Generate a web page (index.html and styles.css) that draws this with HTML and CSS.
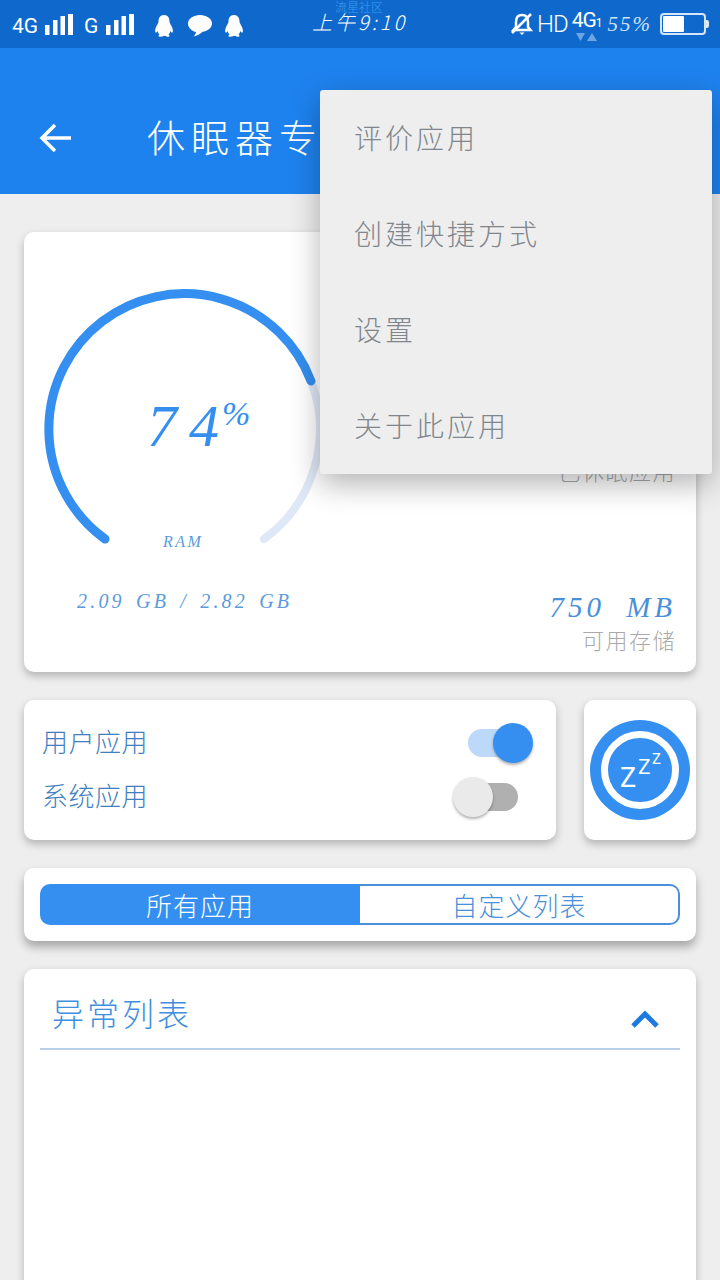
FILE: index.html
```html
<!DOCTYPE html>
<html lang="zh-CN">
<head>
    <meta charset="UTF-8">
    <meta name="viewport" content="width=device-width, initial-scale=1.0">
    <title>休眠器专</title>
    <link rel="stylesheet" href="styles.css">
</head>
<body>

    <!-- Status bar -->
    <div class="status-bar">
        <div class="status-left">
            <span class="net-label">4G</span>
            <svg class="signal" width="30" height="24" viewBox="0 0 30 24"><rect x="0" y="11" width="4.500" height="10" fill="#fff"/><rect x="8" y="6" width="4.500" height="15" fill="#fff"/><rect x="15.500" y="2" width="4.500" height="19" fill="#fff"/><rect x="23" y="0" width="5" height="21" fill="#fff"/></svg>
            <span class="net-label net-g">G</span>
            <svg class="signal" width="30" height="24" viewBox="0 0 30 24"><rect x="0" y="11" width="4.500" height="10" fill="#fff"/><rect x="8" y="6" width="4.500" height="15" fill="#fff"/><rect x="15.500" y="2" width="4.500" height="19" fill="#fff"/><rect x="23" y="0" width="5" height="21" fill="#fff"/></svg>
            <svg class="notify first" width="20" height="22" viewBox="0 0 20 22"><path d="M10 0C6 0 4.500 3 4.500 6.500C4.500 8 3.500 9 2.500 11C1.500 13 0.500 16 1.500 17.500C2.300 18 3.200 17 3.700 16C4 17.500 4.500 18.500 5.500 19.500C4.500 20 4 21 5 21.500C6.500 22 9 21.500 10 20.800C11 21.500 13.500 22 15 21.500C16 21 15.500 20 14.500 19.500C15.500 18.500 16 17.500 16.300 16C16.800 17 17.700 18 18.500 17.500C19.500 16 18.500 13 17.500 11C16.500 9 15.500 8 15.500 6.500C15.500 3 14 0 10 0Z" fill="#fff"/></svg>
            <svg class="notify chat" width="24" height="22" viewBox="0 0 24 22"><path d="M12 0C5.500 0 0 3.600 0 8.500C0 13 4.500 16.500 8 17C7.800 18.500 7 20 5.500 21.500C9 21 12.500 19 14.500 16.800C19.500 16 24 13 24 8.500C24 3.600 18.500 0 12 0Z" fill="#fff"/></svg>
            <svg class="notify" width="20" height="22" viewBox="0 0 20 22"><path d="M10 0C6 0 4.500 3 4.500 6.500C4.500 8 3.500 9 2.500 11C1.500 13 0.500 16 1.500 17.500C2.300 18 3.200 17 3.700 16C4 17.500 4.500 18.500 5.500 19.500C4.500 20 4 21 5 21.500C6.500 22 9 21.500 10 20.800C11 21.500 13.500 22 15 21.500C16 21 15.500 20 14.500 19.500C15.500 18.500 16 17.500 16.300 16C16.800 17 17.700 18 18.500 17.500C19.500 16 18.500 13 17.500 11C16.500 9 15.500 8 15.500 6.500C15.500 3 14 0 10 0Z" fill="#fff"/></svg>
        </div>
        <div class="status-center">
            <span class="watermark">流星社区</span>
            <span class="clock">上午9:10</span>
        </div>
        <div class="status-right">
            <svg width="22" height="24" viewBox="0 0 22 24"><path d="M11 3C7 3 5 6 5 10V15L2.500 18H19.500L17 15V10C17 6 15 3 11 3Z" fill="none" stroke="#fff" stroke-width="2.500"/><path d="M8.500 20.500H13.500L11 23Z" fill="#fff"/><path d="M1 21L20 2" stroke="#fff" stroke-width="2.500"/></svg>
            <span class="hd">HD</span>
            <div class="net-four">
                <span class="four-label">4G<small>1</small></span>
                <svg width="22" height="8" viewBox="0 0 22 8"><path d="M0 0H9L4.500 8Z" fill="#6ea5e6"/><path d="M11 8H21L16 0Z" fill="#6ea5e6"/></svg>
            </div>
            <span class="battery-text">55%</span>
            <div class="battery"><div class="battery-fill"></div></div>
            <div class="battery-tip"></div>
        </div>
    </div>

    <!-- Title bar -->
    <div class="app-bar">
        <svg class="back-icon" width="34" height="32" viewBox="0 0 34 32"><path d="M32 16H3M16 3L3 16L16 29" fill="none" stroke="#fff" stroke-width="3.500"/></svg>
        <span class="app-title">休眠器专</span>
    </div>

    <div class="content">

        <div class="card info-card">
            <div class="ram-side">
                <div class="gauge">
                    <svg class="gauge-ring" width="290" height="270" viewBox="0 0 290 270">
                        <path d="M277 91A135.500 135.500 0 0 1 230 249" fill="none" stroke="#dfe8f6" stroke-width="8" stroke-linecap="round"/>
                        <path d="M71 249A135.500 135.500 0 1 1 277 91" fill="none" stroke="#348ff0" stroke-width="9" stroke-linecap="round"/>
                    </svg>
                    <div class="gauge-value">74<sup>%</sup></div>
                    <div class="gauge-label">RAM</div>
                </div>
                <div class="ram-usage">2.09 GB / 2.82 GB</div>
            </div>
            <div class="storage-side">
                <div class="hibernated">已休眠应用</div>
                <div>
                    <div class="storage-value">750 MB</div>
                    <div class="storage-label">可用存储</div>
                </div>
            </div>
        </div>

        <div class="switch-row">
            <div class="card switch-card">
                <div class="switch-line">
                    <span>用户应用</span>
                    <div class="switch on"><div class="knob"></div></div>
                </div>
                <div class="switch-line">
                    <span>系统应用</span>
                    <div class="switch"><div class="knob"></div></div>
                </div>
            </div>
            <div class="card sleep-card">
                <svg width="100" height="100" viewBox="0 0 100 100">
                    <circle cx="50" cy="50" r="50" fill="#348ff0"/>
                    <circle cx="50" cy="50" r="35.500" fill="#348ff0" stroke="#fff" stroke-width="7"/>
                    <text x="30" y="67" class="zzz zzz-big">Z</text>
                    <text x="48" y="54" class="zzz zzz-mid">Z</text>
                    <text x="62" y="44" class="zzz zzz-small">Z</text>
                </svg>
            </div>
        </div>

        <div class="card tab-card">
            <div class="tabs">
                <div class="tab active">所有应用</div>
                <div class="tab">自定义列表</div>
            </div>
        </div>

        <div class="card list-card">
            <div class="list-head">
                <span class="list-title">异常列表</span>
                <svg width="30" height="18" viewBox="0 0 30 18"><path d="M3 16L15 4L27 16" fill="none" stroke="#1e7ae0" stroke-width="5"/></svg>
            </div>
        </div>

    </div>

    <!-- Overflow menu (open) -->
    <div class="popup-menu">
        <div class="menu-item">评价应用</div>
        <div class="menu-item">创建快捷方式</div>
        <div class="menu-item">设置</div>
        <div class="menu-item">关于此应用</div>
    </div>

</body>
</html>
```

FILE: styles.css
```css
body {
    margin: 0;
    width: 720px;
    height: 1280px;
    overflow: hidden;
    position: relative;
    background-color: #eeeeee;
    font-family: "Noto Sans CJK SC", "Noto Sans", sans-serif;
    font-weight: 300;
}
.status-bar {
    height: 48px;
    background-color: #0f69cc;
    color: #fff;
    display: flex;
    align-items: center;
    padding: 0 0 0 12px;
    box-sizing: border-box;
}
.status-left {
    width: 296px;
    padding-top: 4px;
    display: flex;
    align-items: center;
    flex-shrink: 0;
}
.net-label {
    font-family: Roboto, sans-serif;
    font-weight: 400;
    font-size: 21px;
    margin-right: 7px;
}
.net-g {
    margin-left: 9px;
    margin-right: 8px;
}
.notify {
    margin-left: 12px;
}
.notify.first {
    margin-left: 18px;
}
.notify.chat {
    margin-left: 14px;
}
.status-center {
    width: 100px;
    padding-left: 4px;
    padding-bottom: 6px;
    box-sizing: border-box;
    position: relative;
    flex-shrink: 0;
}
.watermark {
    position: absolute;
    left: 27px;
    top: -6px;
    font-size: 12px;
    line-height: 12px;
    color: #3d9bf0;
    white-space: nowrap;
}
.clock {
    font-size: 20px;
    letter-spacing: 3px;
    white-space: nowrap;
    font-style: italic;
}
.status-right {
    display: flex;
    align-items: center;
    margin-left: 103px;
}
.hd {
    font-family: Roboto, sans-serif;
    font-weight: 300;
    font-size: 24px;
    margin-left: 4px;
    letter-spacing: -1px;
}
.net-four {
    display: flex;
    flex-direction: column;
    align-items: center;
    margin-left: 4px;
    height: 38px;
}
.net-four svg {
    flex-shrink: 0;
    margin-top: -5px;
}
.four-label {
    font-family: Roboto, sans-serif;
    font-size: 21px;
    line-height: 30px;
    letter-spacing: -1px;
    font-weight: 400;
}
.four-label small {
    font-size: 12px;
}
.battery-text {
    font-family: "Liberation Serif", serif;
    font-style: italic;
    font-size: 21px;
    color: #cfe2f8;
    letter-spacing: 2px;
    margin-left: 6px;
}
.battery {
    width: 40px;
    height: 16px;
    border: 2px solid #d5e6fa;
    border-radius: 4px;
    margin-left: 8px;
    padding: 1px;
}
.battery-fill {
    width: 21px;
    height: 16px;
    background-color: #fff;
    border-radius: 1px;
}
.battery-tip {
    width: 3px;
    height: 8px;
    background-color: #d5e6fa;
    border-radius: 0 2px 2px 0;
}
.app-bar {
    height: 146px;
    background-color: #1e82ee;
    display: flex;
    align-items: center;
    padding-top: 34px;
    box-sizing: border-box;
    color: #fff;
}
.back-icon {
    margin-left: 39px;
}
.app-title {
    margin-left: 74px;
    margin-bottom: 6px;
    font-size: 38px;
    letter-spacing: 6px;
    white-space: nowrap;
}
.content {
    padding: 38px 24px 0;
    display: flex;
    flex-direction: column;
    gap: 28px;
}
.card {
    background-color: #fff;
    border-radius: 10px;
    box-shadow: 0 4px 8px rgba(0, 0, 0, 0.25);
}
.info-card {
    height: 440px;
    display: flex;
    justify-content: space-between;
    box-sizing: border-box;
    padding: 0 20px 18px 10px;
}
.ram-side {
    width: 290px;
    display: flex;
    flex-direction: column;
}
.gauge {
    height: 270px;
    margin-top: 58px;
    position: relative;
}
.gauge-ring {
    position: absolute;
    left: 0;
    top: 0;
    overflow: visible;
}
.gauge-value {
    position: absolute;
    left: 113px;
    top: 101px;
    font-family: "Liberation Serif", serif;
    font-style: italic;
    font-size: 60px;
    line-height: 70px;
    letter-spacing: 12px;
    color: #348ff0;
}
.gauge-value sup {
    font-size: 34px;
    font-weight: 300;
    line-height: 0;
    letter-spacing: 0;
    vertical-align: 21px;
    margin-left: -9px;
}
.gauge-label {
    position: absolute;
    left: 129px;
    top: 243px;
    font-family: "Liberation Serif", serif;
    font-style: italic;
    font-size: 16px;
    line-height: 18px;
    letter-spacing: 2.500px;
    color: #5a9bdc;
}
.ram-usage {
    margin-top: 29px;
    margin-left: 43px;
    font-family: "Liberation Serif", serif;
    font-style: italic;
    font-size: 20px;
    line-height: 24px;
    letter-spacing: 3.200px;
    word-spacing: 3px;
    white-space: pre;
    color: #5a9bdc;
}
.storage-side {
    display: flex;
    flex-direction: column;
    justify-content: space-between;
    align-items: flex-end;
    text-align: right;
}
.hibernated {
    margin-top: 222px;
    font-size: 22px;
    letter-spacing: 1.500px;
    color: #a9a9a9;
}
.storage-value {
    font-family: "Liberation Serif", serif;
    font-style: italic;
    font-size: 29px;
    line-height: 34px;
    letter-spacing: 4px;
    word-spacing: 10px;
    color: #4a90d8;
}
.storage-label {
    font-size: 22px;
    line-height: 30px;
    letter-spacing: 1.500px;
    color: #a9a9a9;
}
.switch-row {
    display: flex;
    gap: 28px;
    height: 140px;
}
.switch-card {
    flex: 1;
    display: flex;
    flex-direction: column;
    justify-content: center;
    gap: 14px;
    padding: 0 38px 6px 18px;
}
.switch-line {
    display: flex;
    justify-content: space-between;
    align-items: center;
    height: 40px;
    font-size: 26px;
    letter-spacing: 0.500px;
    color: #3f7fc0;
}
.switch {
    width: 50px;
    height: 28px;
    margin-top: 6px;
    border-radius: 14px;
    background-color: #b0b0b0;
    position: relative;
}
.switch.on {
    background-color: #bcd9fa;
}
.knob {
    position: absolute;
    left: -15px;
    top: -6px;
    width: 40px;
    height: 40px;
    border-radius: 50%;
    background-color: #eaeaea;
    box-shadow: 0 2px 3px rgba(0, 0, 0, 0.3);
}
.switch.on .knob {
    left: auto;
    right: -15px;
    background-color: #348ff0;
}
.sleep-card {
    width: 112px;
    display: flex;
    justify-content: center;
    align-items: center;
}
.zzz {
    fill: #fff;
    font-family: Roboto, sans-serif;
    font-weight: 400;
}
.zzz-big {
    font-size: 27px;
}
.zzz-mid {
    font-size: 21px;
}
.zzz-small {
    font-size: 15px;
}
.tab-card {
    height: 73px;
    padding: 16px;
    box-sizing: border-box;
    box-shadow: 0 6px 10px rgba(0, 0, 0, 0.3);
}
.tabs {
    display: flex;
    height: 41px;
}
.tab {
    flex: 0 0 50%;
    box-sizing: border-box;
    text-align: center;
    font-size: 26px;
    line-height: 37px;
    letter-spacing: 1px;
    color: #4a90d8;
    border: 2px solid #4a90d8;
    border-left: none;
    border-radius: 0 10px 10px 0;
}
.tab.active {
    background-color: #348ff0;
    border: none;
    border-radius: 10px 0 0 10px;
    line-height: 41px;
    color: #fff;
}
.list-card {
    height: 400px;
    padding: 0 16px;
}
.list-head {
    height: 79px;
    border-bottom: 2px solid #b7cfe9;
    display: flex;
    justify-content: space-between;
    align-items: center;
    padding: 0 20px 0 12px;
}
.list-head svg {
    margin-top: 20px;
}
.list-title {
    margin-top: 6px;
    font-size: 32px;
    letter-spacing: 3px;
    color: #3f8fe0;
}
.popup-menu {
    position: absolute;
    left: 320px;
    top: 90px;
    width: 392px;
    background-color: #eeeeee;
    border-radius: 3px;
    box-shadow: 0 10px 30px rgba(0, 0, 0, 0.3);
}
.menu-item {
    height: 96px;
    line-height: 94px;
    padding-left: 34px;
    font-size: 28px;
    letter-spacing: 3px;
    color: #80868c;
}
```
